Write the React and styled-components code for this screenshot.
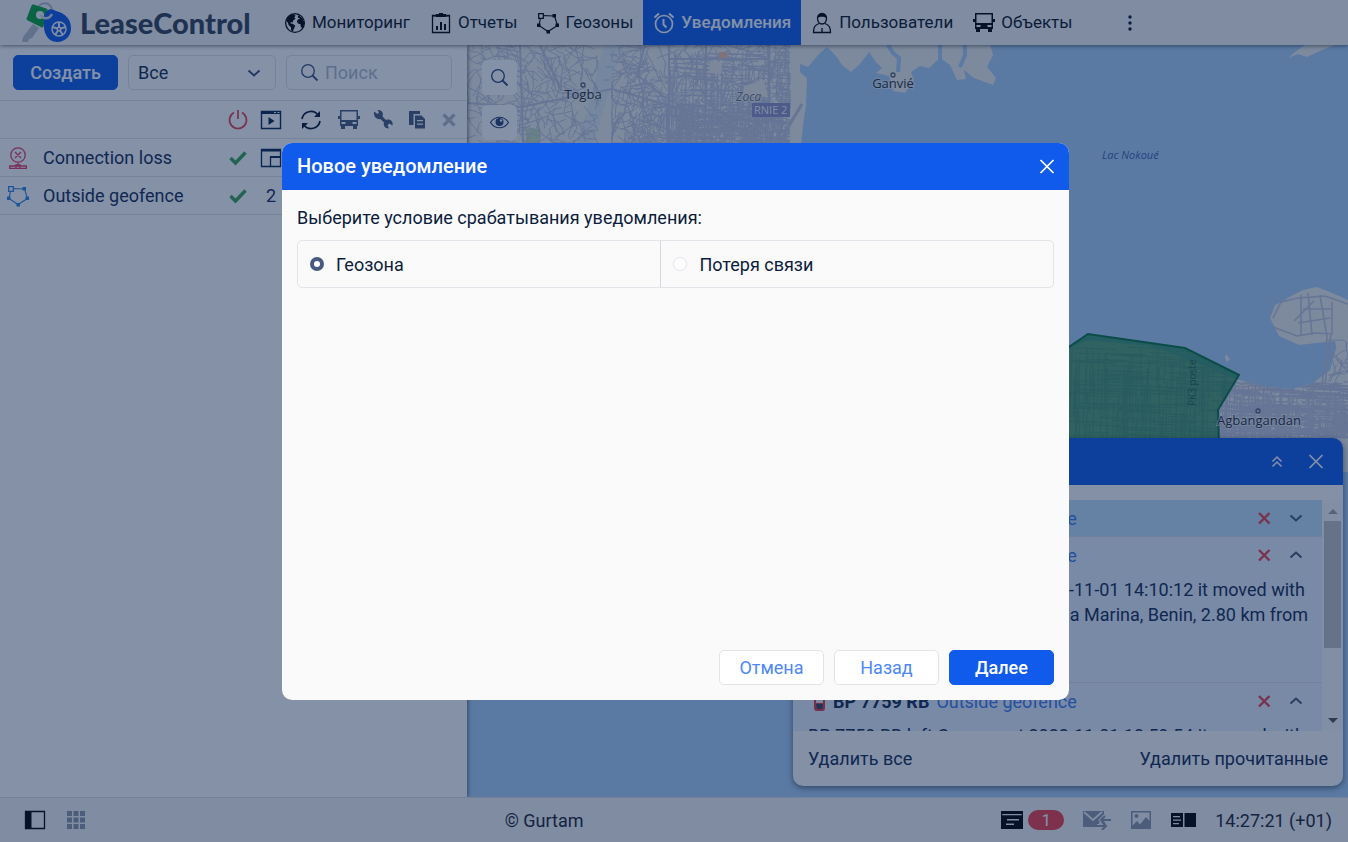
import React, { useState } from 'react';
import styled, { createGlobalStyle } from 'styled-components';

const NAV = [
	{ id: 'monitoring', label: 'Мониторинг', icon: 'globe' },
	{ id: 'reports', label: 'Отчеты', icon: 'report' },
	{ id: 'geofences', label: 'Геозоны', icon: 'geofence' },
	{ id: 'notifications', label: 'Уведомления', icon: 'alarm' },
	{ id: 'users', label: 'Пользователи', icon: 'user' },
	{ id: 'units', label: 'Объекты', icon: 'bus' },
];

const TOOLS = [
	{ icon: 'power', color: '#e8404a', label: 'Включить' },
	{ icon: 'player', color: '#0a2450', label: 'Действия' },
	{ icon: 'refresh', color: '#0a1430', label: 'Обновить' },
	{ icon: 'bus', color: '#4a5a7c', label: 'Объекты' },
	{ icon: 'wrench', color: '#4a5a7c', label: 'Свойства' },
	{ icon: 'copy', color: '#4a5a7c', label: 'Копировать' },
	{ icon: 'cross', color: '#b4bac6', label: 'Удалить' },
];

const RULES = [
	{ name: 'Connection loss', icon: 'loss', color: '#e83a64', popup: true },
	{ name: 'Outside geofence', icon: 'geofence', color: '#2f86dc', units: 2 },
];

const MESSAGES = [
	{ id: 1, unread: true },
	{
		id: 2,
		open: true,
		text: [
			'BP 7759 RB left Cosmos at 2022-11-01 14:10:12 it moved with',
			'speed 31 km/h on Boulevard de la Marina, Benin, 2.80 km from',
		],
	},
	{
		id: 3,
		open: true,
		text: ['BP 7759 RB left Cosmos at 2022-11-01 12:59:54 it moved with'],
	},
];

const shapes = {
	globe: (
		<>
			<circle cx="11" cy="11" r="9.4" fill="none" stroke="currentColor" strokeWidth="1.3" />
			<path d="M3 6.5 6 3.200l4-1 1.600 1.600-1.400 1.700 1.500 1.200-2.400 1.600-.6 2.100-2-.4L6.400 11.300l2.600.8 2.300 1.700-1.300 2.700-1.200 2.900-1.600-.8-.3-3.300-2.300-2.400-.8-2.400-1.600-1.500z" fill="currentColor" />
			<path d="m14 3 4.200 3 1.900 4-.2 3.200-1.700 3.100-1.400-1.600-.3-2.500-2.500-.6-1.200-2.100 1.200-2.200 2.300-.5-2.500-1.300z" fill="currentColor" />
		</>
	),
	report: (
		<>
			<path d="M2.500 3.500h17v17h-17z" fill="none" stroke="currentColor" strokeWidth="1.300" />
			<path d="M6 2h3V1h4v1h3v3H6zM2 3h18v1.500H2zM6 14h2v4H6zM10 10h2v8h-2zM14 12h2v6h-2z" fill="currentColor" />
		</>
	),
	geofence: (
		<>
			<path d="M4 3.500 17.500 4l3 9.500L11 19.500 2 13.500z" fill="none" stroke="currentColor" strokeWidth="1.100" />
			<path d="M15.500 2H19v3.500h-3.500zM18.500 11.500H22V15h-3.500zM9.500 18H13v3.500H9.500zM0 11.500h3.500V15H0z" fill="currentColor" />
			<path d="M1.700 1.700H6.300V6.300H1.700z" fill="var(--hole)" stroke="currentColor" strokeWidth="1.300" />
		</>
	),
	alarm: (
		<>
			<circle cx="11" cy="12" r="8.500" fill="none" stroke="currentColor" strokeWidth="1.700" />
			<path d="M10.500 7v5.500l3 3M1.500 5.500 6 1.500M16 1.500l4.500 4" fill="none" stroke="currentColor" strokeWidth="2" />
		</>
	),
	user: (
		<>
			<path d="M6.500 6a4.500 4.500 0 0 1 9 0c0 3.500-2 6-4.500 6S6.500 9.500 6.500 6zM8 11.500C4 13 2.500 15 2.500 20.500h17c0-5.500-1.500-7.500-5.500-9M11 16v4.500" fill="none" stroke="currentColor" strokeWidth="1.300" />
			<path d="M6.500 6c0-6 9-6 9 0-2.500-1.600-6.500-1.600-9 0z" fill="currentColor" />
		</>
	),
	bus: (
		<path fillRule="evenodd" fill="currentColor" d="M2 1h18v6h2v3h-2v7h-1v3h-4v-3H7v3H3v-3H2v-7H0V7h2zm1.500 1.500V11h15V2.500zM3.500 13v2h4v-2zm11 0v2h4v-2z" />
	),
	power: (
		<path d="M7 3.500a8.500 8.500 0 1 0 8 0M11 1v9" fill="none" stroke="currentColor" strokeWidth="1.700" />
	),
	player: (
		<>
			<path d="M1.500 2.500h19v17h-19z" fill="none" stroke="currentColor" strokeWidth="1.400" />
			<path d="M1 2h20v3H1zM8.500 8l6 4-6 4z" fill="currentColor" />
			<path d="M14 3.500h2M17.500 3.500h2" stroke="#fff" />
		</>
	),
	window: (
		<>
			<path d="M1.500 2.500h19v17h-19z" fill="none" stroke="currentColor" strokeWidth="1.300" />
			<path d="M1 2h20v2.500H1zM10 9h11v2H10z" fill="currentColor" />
			<path d="M10.500 10v9.500" stroke="currentColor" strokeWidth="1.300" />
		</>
	),
	refresh: (
		<>
			<path d="M2 10a9 9 0 0 1 16-4M20 12a9 9 0 0 1-16 4" fill="none" stroke="currentColor" strokeWidth="1.700" />
			<path d="M20 2v6h-6zM2 20v-6h6z" fill="currentColor" />
		</>
	),
	wrench: (
		<path d="M2 2.500 5.500 5 7 3.500 5.500 1c4-.5 6.500 3 5 6.500l3.500 3.500c4-1.500 7.500 1.500 6.500 5.500l-3-2-2 1.500 1.500 3.500c-4 0-6-3-5-6L8.500 10C5 11 1 7.500 2 2.500z" fill="currentColor" />
	),
	copy: (
		<>
			<path d="M3 2h11v3H7.500v11H3z" fill="currentColor" />
			<path fillRule="evenodd" d="M9 6.500h6.500L19 10v9.500H9zM11 11v1.300h6V11zm0 3.500v1.300h6v-1.300z" fill="currentColor" />
		</>
	),
	cross: <path d="m5.500 5.500 11 11M16.500 5.500l-11 11" fill="none" stroke="currentColor" strokeWidth="3.200" />,
	thinCross: <path d="m4.500 4 13 13M17.500 4l-13 13" fill="none" stroke="currentColor" strokeWidth="1.700" />,
	redCross: <path d="m6 6 10.500 10.500M16.500 6 6 16.500" fill="none" stroke="currentColor" strokeWidth="2.400" />,
	check: <path d="m3.500 11 5 5L18.500 5.500" fill="none" stroke="currentColor" strokeWidth="3.400" />,
	loss: (
		<>
			<circle cx="11" cy="8" r="7.200" fill="none" stroke="currentColor" strokeWidth="1.300" />
			<path d="m8 5 6 6M14 5l-6 6M11 15.500v3M2.700 19h16.600v2.300H2.700zM9 18h4v3.500H9z" fill="none" stroke="currentColor" strokeWidth="1.300" />
		</>
	),
	search: (
		<>
			<circle cx="9" cy="9" r="6.300" fill="none" stroke="currentColor" strokeWidth="1.300" />
			<path d="m13.500 13.500 5 5" stroke="currentColor" strokeWidth="1.800" />
		</>
	),
	eye: (
		<>
			<path d="M1.500 10.500c4.500-7 13.500-7 18 0-4.500 7-13.500 7-18 0z" fill="none" stroke="currentColor" strokeWidth="1.200" />
			<circle cx="10.500" cy="10" r="4" fill="currentColor" />
			<circle cx="12" cy="8.500" r="1.200" fill="#fff" />
		</>
	),
	down: <path d="m5.500 8.500 5.500 5 5.500-5" fill="none" stroke="currentColor" strokeWidth="2" />,
	up: <path d="m5.500 13.500 5.500-5 5.500 5" fill="none" stroke="currentColor" strokeWidth="2" />,
	doubleUp: <path d="m6.500 10.500 4.500-4.500 4.500 4.500M6.500 15.500l4.500-4.500 4.500 4.500" fill="none" stroke="currentColor" strokeWidth="1.500" />,
	sidebar: (
		<>
			<path d="M1.500 2.500h19v17h-19z" fill="none" stroke="currentColor" strokeWidth="1.300" />
			<path d="M2 2h5.500v18H2z" fill="currentColor" />
		</>
	),
	tiles: (
		<path d="M2 2h5v5H2zM8.500 2h5v5h-5zM15 2h5v5h-5zM2 8.500h5v5H2zM8.500 8.500h5v5h-5zM15 8.500h5v5h-5zM2 15h5v5H2zM8.500 15h5v5h-5zM15 15h5v5h-5z" fill="currentColor" />
	),
	panel: (
		<path fillRule="evenodd" d="M0 2h22v18H0zm1.300 3v1.300h19.400V5zM6 10v1.500h12V10zm-1 4.500V16h8v-1.500z" fill="currentColor" />
	),
	image: (
		<path fillRule="evenodd" d="M1 2h20v18H1zm1.500 1.500v13L7 12l3 3.500L16 8l3.500 4V3.500zM6.500 5a2 2 0 1 1 0 4 2 2 0 0 1 0-4z" fill="currentColor" />
	),
};

const Icon = ({ name, size = 22, color }) => (
	<Glyph width={size} height={size} viewBox="0 0 22 22" $color={color} aria-hidden="true">
		{shapes[name]}
	</Glyph>
);

const Logo = () => (
	<svg width="52" height="42" viewBox="0 0 52 42" aria-hidden="true">
		<path d="m11 22 6 4-7 10-3 1-1 3H0l1-5z" fill="#b9bec9" />
		<path d="M17 4a7.500 7.500 0 1 1 8 12" fill="none" stroke="#b4bccb" strokeWidth="2" />
		<path d="m11 4 13 4-4 16L6 17z" fill="#08a338" stroke="#08a338" strokeWidth="3" strokeLinejoin="round" />
		<circle cx="18" cy="13" r="4" fill="#f5f5f5" />
		<path d="M24 10c3-4 6-3 10-1 9 2 15 8 15 17a13.500 13.500 0 0 1-14 14c-9 0-14-9-13-19 0-5 0-8 2-11z" fill="#1058e8" />
		<path d="M19 13c1 4 8 5 11-1" fill="none" stroke="#d9dde5" strokeWidth="2.500" />
		<circle cx="37" cy="27" r="7" fill="none" stroke="#f5f5f5" strokeWidth="1.500" />
		<path d="M37 20v7l6.500-2M37 27l4 6M37 27l-4 6M37 27l-6.500-2" fill="none" stroke="#f5f5f5" strokeWidth="2" />
		<circle cx="37" cy="27" r="2.500" fill="#f5f5f5" />
		<circle cx="37" cy="27" r="1" fill="#1058e8" />
	</svg>
);

// seeded so the street pattern is the same on every render
const streets = (seed, count, x0, y0, x1, y1, len, square) => {
	let s = seed;
	const rnd = () => {
		s = (s * 16807) % 2147483647;
		return s / 2147483647;
	};
	let d = '';
	for (let i = 0; i < count; i++) {
		let x = x0 + rnd() * (x1 - x0);
		let y = y0 + rnd() * (y1 - y0);
		const a = square ? (rnd() > 0.5 ? 0.04 : 1.6) : rnd() * 6.28;
		d += `M${x.toFixed(1)} ${y.toFixed(1)}`;
		for (let k = 0; k < 3; k++) {
			const turn = square ? 0 : (rnd() - 0.5) * 1.2;
			const l = (0.4 + rnd()) * len;
			x = Math.min(x1, Math.max(x0, x + Math.cos(a + turn) * l));
			y = Math.min(y1, Math.max(y0, y + Math.sin(a + turn) * l));
			d += `L${x.toFixed(1)} ${y.toFixed(1)}`;
		}
	}
	return d;
};

const ZONE = '1060,353 1088,334 1185,348 1239,375 1218,410 1220,480 1060,480';

const CityMap = () => (
	<MapSvg viewBox="467 45 881 752" preserveAspectRatio="xMinYMin slice" aria-label="Карта">
		<defs>
			<clipPath id="zone">
				<polygon points={ZONE} />
			</clipPath>
			<clipPath id="south">
				<path d="M1060 353 1088 340 1150 346 1180 356 1239 380 1267 387 1293 389 1313 383 1330 370 1348 378V480H1060z" />
			</clipPath>
		</defs>
		<path fill="#acd0f6" d="M467 45h881v752H467z" />
		<g fill="#f0eee9">
			<path d="M467 45H829L819 54 808 67 800 64 800 72 807 78 806 105 803 125 801 145 790 480H467z" />
			<path d="M825 45 836 56 842 65 851 72 860 64 869 52 876 62 882 68 876 73 889 76 893 91 905 93 914 80 911 72 920 66 929 68 940 58 950 65 957 80 966 79 964 70 974 78 993 85 996 78 987 67 993 55 990 45z" />
			<path d="m1288 58 7-6 10-7h30l-13 5-15 7-9-3z" />
			<path d="m1270 318 5-13 18-10 10-5 14-3 13 5 18 8v90l-35 10-1-7 18-13 8-22-3-17-36 4-20-9z" />
			<path d="M1060 353 1088 340 1150 346 1180 356 1239 380 1267 387 1293 389 1313 383 1330 370 1337 345 1348 340V472H1060z" />
			<path d="m1226 354 4 5-3 3-2-4z" />
		</g>
		<path d="M888 45 893 53 899 58 898 72M940 45v18M965 45v10l-5 12" fill="none" stroke="#acd0f6" strokeWidth="4" />
		<path d="M604 45h18l-14 50-15 48h-15l14-50z" fill="#e1ebec" />
		<path d="M610 55h7M606 67h8M603 80h6M594 100h8M589 115h8M580 134h9" stroke="#a9cce8" />
		<path d="M526 129h14v14h-14z" fill="#c4dfba" />
		<g fill="none" stroke="#c3c6dc">
			<path d={streets(11, 210, 467, 45, 598, 143, 9)} />
			<path d={streets(29, 330, 612, 45, 790, 143, 10)} />
			<path d={streets(97, 190, 625, 100, 765, 143, 6)} />
			<path d={streets(47, 155, 669, 50, 768, 143, 12, true)} strokeWidth="1.200" />
			<path d={streets(31, 110, 768, 45, 790, 143, 6, true)} />
			<path d={streets(59, 140, 665, 104, 784, 143, 7, true)} strokeWidth="1.500" />
			<path d="M467 103 520 107 612 89 700 114M540 45l21 45M645 45l-8 30 31 25M669 45v98M706 45l-1 98M669 59h100M520 45l3 98" strokeWidth="2" />
			<path d="M769 45v65l5 15-4 18M802 104l-15 25-6 14" strokeWidth="3" />
			<g clipPath="url(#south)">
				<path d={streets(83, 350, 1218, 382, 1348, 438, 13, true)} strokeWidth="1.300" />
				<path d={streets(37, 130, 1220, 382, 1348, 438, 9)} />
				<path d={streets(67, 300, 1060, 346, 1236, 438, 15, true)} />
			</g>
			<path d="M1273 318 1281 302 1298 298 1325 296 1348 304M1273 327l24 9 18-3 18 1M1301 295v40M1308 293l4 42M1320 295l7 42-5 49M1332 302v31M1294 321l20-20M1303 309h29M1298 323l32-5M1331 334l-6 50M1220 437l128-5M1270 389l16 48" strokeWidth="1.600" />
			<path d={streets(90, 18, 1328, 340, 1348, 382, 8)} />
		</g>
		<path d="m710 61 12 1-1 12-12-1zM744 86l20-6 4 17-24-2z" fill="#eeece3" />
		<path d="M719 52h8v6h-8z" fill="#f6c19c" />
		<polygon points={ZONE} fill="#0b7a38" fillOpacity=".68" stroke="#0b7440" strokeWidth="2" />
		<g clipPath="url(#zone)" stroke="#5ba27d" fill="none" opacity=".25">
			<path d={streets(71, 120, 1060, 350, 1220, 438, 12, true)} />
		</g>
		<g fill="none" stroke="#59616f" strokeWidth="1.300">
			<circle cx="583" cy="85" r="2" />
			<circle cx="893" cy="75" r="2" />
			<circle cx="1258" cy="411" r="2" />
		</g>
		<Place x="583" y="99" textAnchor="middle">Togba</Place>
		<Place x="893" y="88" textAnchor="middle">Ganvié</Place>
		<Place x="1259" y="425" textAnchor="middle">Agbangandan</Place>
		<Area x="736" y="101">Zoca</Area>
		<path d="M752 103h38v14h-38z" fill="#8e92c5" />
		<Road x="754" y="114">RNIE 2</Road>
		<Lake x="1102" y="159">Lac Nokoué</Lake>
		<Street transform="translate(1196 406) rotate(-90)">PK3 poste</Street>
	</MapSvg>
);

const App = () => {
	const [condition, setCondition] = useState('geofence');

	return (
		<>
			<GlobalStyle />
			<Page>
				<Header>
					<Brand>
						<Logo />
						<BrandName>LeaseControl</BrandName>
					</Brand>
					<Nav>
						{NAV.map(item => (
							<NavLink key={item.id} href={`#${item.id}`} $active={item.id === 'notifications'}>
								<Icon name={item.icon} />
								{item.label}
							</NavLink>
						))}
					</Nav>
					<MoreButton aria-label="Ещё">
						<svg width="4" height="16" viewBox="0 0 4 16" fill="#0a1430">
							<circle cx="2" cy="2" r="1.700" />
							<circle cx="2" cy="8" r="1.700" />
							<circle cx="2" cy="14" r="1.700" />
						</svg>
					</MoreButton>
				</Header>

				<Workspace>
					<Sidebar>
						<Filters>
							<Button $primary>Создать</Button>
							<SelectBox>
								<select aria-label="Фильтр">
									<option>Все</option>
								</select>
								<Icon name="down" color="#3d4f78" />
							</SelectBox>
							<SearchBox>
								<Icon name="search" color="#3d4f78" />
								<input type="text" placeholder="Поиск" aria-label="Поиск" />
							</SearchBox>
						</Filters>
						<Row>
							<span />
							<span />
							{TOOLS.map(tool => (
								<IconButton key={tool.icon} aria-label={tool.label}>
									<Icon name={tool.icon} color={tool.color} />
								</IconButton>
							))}
						</Row>
						{RULES.map(rule => (
							<Row key={rule.name}>
								<Icon name={rule.icon} color={rule.color} />
								<span>{rule.name}</span>
								<Icon name="check" color="#3ca253" />
								{rule.popup ? <Icon name="window" color="#0a2450" /> : <span>{rule.units}</span>}
							</Row>
						))}
					</Sidebar>

					<MapArea>
						<CityMap />
						<MapTools>
							<MapButton aria-label="Поиск на карте">
								<Icon name="search" />
							</MapButton>
							<MapButton aria-label="Видимость">
								<Icon name="eye" />
							</MapButton>
						</MapTools>
						<Popup>
							<PopupHeader>
								<IconButton aria-label="Свернуть">
									<Icon name="doubleUp" color="#fff" />
								</IconButton>
								<IconButton aria-label="Закрыть">
									<Icon name="thinCross" color="#fff" />
								</IconButton>
							</PopupHeader>
							<PopupBody>
								<Messages>
									{MESSAGES.map(message => (
										<Message key={message.id} $unread={message.unread}>
											<MessageHead>
												<Car />
												<b>BP 7759 RB</b>
												<a href="#geofence">Outside geofence</a>
												<MessageActions>
													<IconButton aria-label="Удалить">
														<Icon name="redCross" color="#e8404a" />
													</IconButton>
													<IconButton aria-label="Развернуть">
														<Icon name={message.open ? 'up' : 'down'} color="#43547a" />
													</IconButton>
												</MessageActions>
											</MessageHead>
											{message.open && (
												<MessageText>
													{message.text.map(line => (
														<div key={line}>{line}</div>
													))}
												</MessageText>
											)}
										</Message>
									))}
								</Messages>
								<Scrollbar>
									<Arrow $up />
									<Thumb />
									<Arrow />
								</Scrollbar>
							</PopupBody>
							<PopupFooter>
								<TextButton>Удалить все</TextButton>
								<TextButton>Удалить прочитанные</TextButton>
							</PopupFooter>
						</Popup>
					</MapArea>
				</Workspace>

				<Footer>
					<FooterGroup>
						<Icon name="sidebar" color="#000" />
						<Icon name="tiles" color="#8f97a8" />
					</FooterGroup>
					<Copyright>© Gurtam</Copyright>
					<FooterGroup>
						<Counter>
							<Icon name="panel" color="#000" />
							<Badge>1</Badge>
						</Counter>
						<svg width="28" height="20" viewBox="0 0 28 20" aria-hidden="true">
							<path d="M0 1h21v6l-5 6v4H0z" fill="#8f97a8" />
							<path d="m1 2 9 8 9-8" fill="none" stroke="#f5f5f5" strokeWidth="1.800" />
							<path d="M28 10h-9M22 6l-4 4 4 4M14 16h8M19 12l4 4-4 4" fill="none" stroke="#f5f5f5" strokeWidth="4" />
							<path d="M28 10h-9M22 6l-4 4 4 4M14 16h8M19 12l4 4-4 4" fill="none" stroke="#8f97a8" strokeWidth="2" />
						</svg>
						<Icon name="image" color="#8f97a8" />
						<svg width="25" height="16" viewBox="0 0 25 16" aria-hidden="true">
							<path fillRule="evenodd" d="M0 1h12v14H0zm2 3v1.300h7V4zm0 3.500v1.300h8V7.500zM2 11v1.300h6V11zM13.500 1H25v14H13.500z" />
						</svg>
						<time>14:27:21 (+01)</time>
					</FooterGroup>
				</Footer>

				<Overlay>
					<Dialog role="dialog" aria-modal="true" aria-labelledby="dialog-title">
						<DialogHeader>
							<h2 id="dialog-title">Новое уведомление</h2>
							<IconButton aria-label="Закрыть">
								<Icon name="thinCross" color="#fff" />
							</IconButton>
						</DialogHeader>
						<DialogBody>
							<legend>Выберите условие срабатывания уведомления:</legend>
							<Options>
								<Option>
									<input
										type="radio"
										name="condition"
										checked={condition === 'geofence'}
										onChange={() => setCondition('geofence')}
									/>
									Геозона
								</Option>
								<Option>
									<input
										type="radio"
										name="condition"
										checked={condition === 'loss'}
										onChange={() => setCondition('loss')}
									/>
									Потеря связи
								</Option>
							</Options>
						</DialogBody>
						<DialogFooter>
							<Button>Отмена</Button>
							<Button>Назад</Button>
							<Button $primary>Далее</Button>
						</DialogFooter>
					</Dialog>
				</Overlay>
			</Page>
		</>
	);
};

const Car = () => (
	<svg width="13" height="22" viewBox="0 0 13 22" aria-hidden="true">
		<rect x="1" y="1" width="11" height="20" rx="3" fill="#e23a44" />
		<path d="M3 5h7v8H3z" fill="#e9e9ee" />
		<path d="M3 14h7l-1 5H4z" fill="#39425a" />
	</svg>
);

export default App;

const GlobalStyle = createGlobalStyle`
	* {
		box-sizing: border-box;
	}
	body {
		margin: 0;
		font-family: Roboto, 'Liberation Sans', sans-serif;
		font-size: 18px;
		line-height: 25px;
		color: #152a52;
	}
	button, input, select {
		font: inherit;
		color: inherit;
	}
	button {
		cursor: pointer;
	}
`;

const Glyph = styled.svg`
	--hole: #fff;
	flex: none;
	color: ${({ $color }) => $color || 'inherit'};
`;

const Page = styled.div`
	position: relative;
	display: flex;
	flex-direction: column;
	height: 100vh;
	overflow: hidden;
`;

const Header = styled.header`
	display: flex;
	height: 45px;
	flex: none;
	background: #f5f5f5;
	box-shadow: 0 1px 4px rgba(0, 0, 0, 0.5);
	z-index: 2;
`;

const Brand = styled.div`
	display: flex;
	align-items: center;
	gap: 6px;
	width: 274px;
	padding-left: 22px;
`;

const BrandName = styled.span`
	font-family: Lato, sans-serif;
	font-size: 29px;
	font-weight: 900;
	color: #364052;
`;

const Nav = styled.nav`
	display: flex;
	font-size: 17px;
`;

const NavLink = styled.a`
	display: flex;
	align-items: center;
	gap: 6px;
	padding: 0 10px;
	text-decoration: none;
	color: ${({ $active }) => ($active ? '#fff' : '#0c1220')};
	background: ${({ $active }) => ($active ? '#105beb' : 'none')};
	font-weight: ${({ $active }) => ($active ? 500 : 400)};

	> svg {
		color: ${({ $active }) => ($active ? '#fff' : '#000')};
	}
`;

const MoreButton = styled.button`
	display: flex;
	align-items: center;
	margin-left: 40px;
	border: none;
	background: none;
`;

const Workspace = styled.main`
	display: flex;
	flex: 1;
	min-height: 0;
`;

const Sidebar = styled.aside`
	width: 467px;
	flex: none;
	background: #fff;
	box-shadow: 1px 0 4px rgba(0, 0, 0, 0.5);
	z-index: 1;
`;

const Filters = styled.div`
	display: grid;
	grid-template-columns: 105px 148px 1fr;
	gap: 10px;
	padding: 10px 15px 10px 13px;
	border-bottom: 1px solid #dfe2e8;
`;

const Button = styled.button`
	width: 105px;
	height: 35px;
	padding: 0;
	border-radius: 5px;
	border: 1px solid ${({ $primary }) => ($primary ? '#105beb' : '#e2e4ea')};
	background: ${({ $primary }) => ($primary ? '#105beb' : '#fff')};
	color: ${({ $primary }) => ($primary ? '#fff' : '#4d87f7')};
	font-weight: ${({ $primary }) => ($primary ? 500 : 400)};
`;

const SelectBox = styled.div`
	display: flex;
	align-items: center;
	height: 35px;
	padding: 0 10px 0 9px;
	border: 1px solid #dfe2e8;
	border-radius: 5px;

	> select {
		flex: 1;
		padding: 0;
		border: none;
		background: none;
		appearance: none;
	}
`;

const SearchBox = styled.div`
	display: flex;
	align-items: center;
	gap: 4px;
	height: 35px;
	padding: 0 12px;
	border: 1px solid #dfe2e8;
	border-radius: 5px;

	> input {
		width: 100%;
		padding: 0;
		border: none;
		background: none;
	}
	> input::placeholder {
		color: #b3bac9;
	}
`;

const Row = styled.div`
	display: grid;
	grid-template-columns: 36px 185px 34px 32px 48px 28px 40px 28px 36px;
	align-items: center;
	justify-items: center;
	height: 38px;
	border-bottom: 1px solid #dfe2e8;

	> :nth-child(2) {
		justify-self: start;
		padding-left: 7px;
	}
`;

const IconButton = styled.button`
	display: flex;
	padding: 0;
	border: none;
	background: none;
`;

const MapArea = styled.section`
	position: relative;
	flex: 1;
	min-width: 0;
`;

const MapSvg = styled.svg`
	display: block;
	width: 100%;
	height: 100%;
`;

const Place = styled.text`
	font-family: 'Open Sans', sans-serif;
	font-size: 13px;
	fill: #2b2f36;
	stroke: #f5f5f5;
	stroke-width: 2px;
	stroke-opacity: 0.6;
	paint-order: stroke;
`;

const Area = styled(Place)`
	font-size: 12px;
	font-style: italic;
	fill: #73767d;
`;

const Road = styled(Place)`
	font-size: 11px;
	fill: #f5f5f5;
	stroke: none;
`;

const Lake = styled(Place)`
	font-size: 11px;
	font-style: italic;
	fill: #3c62b0;
	stroke: none;
`;

const Street = styled(Place)`
	font-size: 10px;
	fill: #24664a;
	stroke: none;
`;

const MapTools = styled.div`
	position: absolute;
	top: 15px;
	left: 15px;
	display: grid;
	gap: 10px;
`;

const MapButton = styled.button`
	display: flex;
	align-items: center;
	justify-content: center;
	width: 35px;
	height: 35px;
	padding: 0;
	border: none;
	border-radius: 5px;
	background: #fff;
	color: #2d4474;
`;

const Popup = styled.div`
	position: absolute;
	right: 5px;
	bottom: 11px;
	width: 550px;
	border-radius: 10px;
	overflow: hidden;
	background: #fcfcfc;
	box-shadow: 0 2px 6px rgba(0, 0, 0, 0.5);
`;

const PopupHeader = styled.div`
	display: flex;
	align-items: center;
	justify-content: flex-end;
	gap: 17px;
	height: 47px;
	padding-right: 16px;
	background: #105beb;
`;

const PopupBody = styled.div`
	display: flex;
	height: 231px;
	margin-top: 15px;
`;

const Messages = styled.div`
	flex: 1;
	overflow: hidden;
`;

const Message = styled.div`
	background: ${({ $unread }) => ($unread ? '#c0e0fa' : '#e9f1fc')};
	border-bottom: 1px solid #d9dfe9;
`;

const MessageHead = styled.div`
	display: flex;
	align-items: center;
	gap: 7px;
	height: 36px;
	padding: 0 15px 0 20px;

	> a {
		color: #3d7bf2;
		text-decoration: none;
	}
`;

const MessageActions = styled.div`
	display: flex;
	gap: 10px;
	margin-left: auto;
`;

const MessageText = styled.div`
	height: 109px;
	padding: 4px 15px;
	white-space: nowrap;
`;

const Scrollbar = styled.div`
	display: flex;
	flex-direction: column;
	align-items: center;
	width: 21px;
	padding: 9px 0 8px;
	background: #f8f8f8;
`;

const Arrow = styled.span`
	border: 5px solid transparent;
	border-top-width: ${({ $up }) => ($up ? 0 : '5px')};
	border-bottom-width: ${({ $up }) => ($up ? '5px' : 0)};
	border-top-color: ${({ $up }) => ($up ? 'transparent' : '#505050')};
	border-bottom-color: ${({ $up }) => ($up ? '#a3a3a3' : 'transparent')};
`;

const Thumb = styled.span`
	width: 17px;
	height: 127px;
	margin: 7px 0 auto;
	background: #c1c1c1;
`;

const PopupFooter = styled.div`
	display: flex;
	align-items: center;
	justify-content: space-between;
	height: 55px;
	padding: 0 15px;
`;

const TextButton = styled.button`
	padding: 0;
	border: none;
	background: none;
`;

const Footer = styled.footer`
	display: flex;
	align-items: center;
	flex: none;
	height: 45px;
	padding: 0 16px 0 24px;
	border-top: 1px solid #dcdfe5;
	background: #f5f5f5;
	color: #1d2230;
	z-index: 1;
`;

const FooterGroup = styled.div`
	display: flex;
	align-items: center;
	gap: 19px;
`;

const Copyright = styled.div`
	flex: 1;
	text-align: center;
`;

const Counter = styled.div`
	display: flex;
	align-items: center;
	gap: 5px;
`;

const Badge = styled.span`
	width: 36px;
	border-radius: 10px;
	background: #f03e48;
	color: #fff;
	font-size: 17px;
	line-height: 20px;
	text-align: center;
`;

const Overlay = styled.div`
	position: absolute;
	inset: 0;
	z-index: 10;
	padding: 143px 0 0 3px;
	background: rgba(10, 36, 80, 0.5);
`;

const Dialog = styled.div`
	display: flex;
	flex-direction: column;
	width: 787px;
	height: 557px;
	margin: 0 auto;
	border-radius: 10px;
	overflow: hidden;
	background: #fafafa;
	color: #0c1c3c;
`;

const DialogHeader = styled.div`
	display: flex;
	align-items: center;
	justify-content: space-between;
	height: 47px;
	padding: 0 11px 0 15px;
	background: #105beb;
	color: #fff;

	> h2 {
		margin: 0;
		font-size: 20px;
		font-weight: 500;
	}
`;

const DialogBody = styled.fieldset`
	flex: 1;
	margin: 0;
	padding: 15px 15px 0;
	border: none;

	> legend {
		float: left;
		width: 100%;
		padding: 0;
		margin-bottom: 10px;
	}
`;

const Options = styled.div`
	clear: both;
	display: grid;
	grid-template-columns: 48% 52%;
	height: 48px;
	border: 1px solid #e2e4ea;
	border-radius: 5px;
`;

const Option = styled.label`
	display: flex;
	align-items: center;
	gap: 12px;
	padding-left: 12px;

	& + & {
		border-left: 1px solid #d3d7e0;
	}
	> input {
		appearance: none;
		width: 14px;
		height: 14px;
		margin: 0;
		border: 1px solid #dfe2e8;
		border-radius: 50%;
		background: #fff;
	}
	> input:checked {
		border: 4px solid #485a80;
	}
`;

const DialogFooter = styled.div`
	display: flex;
	justify-content: flex-end;
	gap: 10px;
	padding: 15px;
`;
